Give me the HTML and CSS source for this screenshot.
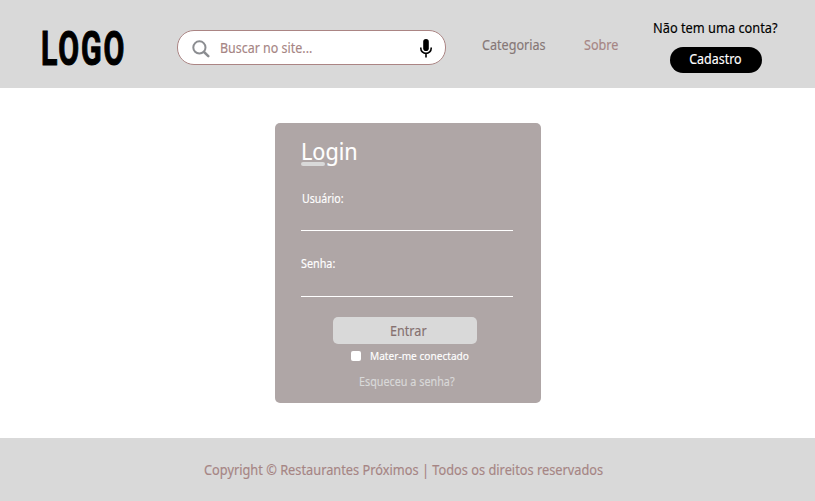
FILE: index.html
```html
<!DOCTYPE html>
<html lang="pt-BR">
<head>
<meta charset="utf-8">
<title>Login</title>
<link rel="stylesheet" href="styles.css">
</head>
<body>
<header class="header">
  <a class="logo"><span class="logo-text">LOGO</span></a>
  <div class="search">
    <svg class="search-icon" width="18" height="18" viewBox="0 0 18 18"><circle cx="7.4" cy="7.4" r="6.1" fill="none" stroke="#8b8d91" stroke-width="2"/><path d="M12 12l4.3 4.1" stroke="#8b8d91" stroke-width="2.5" stroke-linecap="round"/></svg>
    <span class="search-label condensed">Buscar no site...</span>
    <svg class="mic-icon" width="12" height="19" viewBox="0 0 12 19"><rect x="3.2" y="0" width="5.6" height="12" rx="2.8"/><path d="M.8 8.5v.7a5.2 5.2 0 0 0 10.4 0v-.7M6 14.5v4" fill="none" stroke="#000" stroke-width="1.6"/></svg>
  </div>
  <nav class="nav"><a class="categories"><span class="condensed">Categorias</span></a><a class="about"><span class="condensed">Sobre</span></a></nav>
  <div class="account">
    <span class="question condensed">Não tem uma conta?</span>
    <a class="signup"><span class="signup-label condensed">Cadastro</span></a>
  </div>
</header>
<main class="main">
  <form class="card">
    <h1 class="title"><span class="condensed">Login</span></h1>
    <div class="title-bar"></div>
    <div class="field user"><span class="user-label condensed">Usuário:</span></div>
    <div class="field password"><span class="condensed">Senha:</span></div>
    <div class="submit"><span class="submit-label condensed">Entrar</span></div>
    <div class="remember"><span class="box"></span><span class="remember-label condensed">Mater-me conectado</span></div>
    <a class="forgot"><span class="condensed">Esqueceu a senha?</span></a>
  </form>
</main>
<footer class="footer"><span class="copyright condensed">Copyright © Restaurantes Próximos | Todos os direitos reservados</span></footer>
</body>
</html>
```
FILE: styles.css
```css
* { box-sizing: border-box; }
body {
  margin: 0;
  height: 501px;
  display: flex;
  flex-direction: column;
  background: #fff;
  font: 14px/18px "Noto Sans", sans-serif;
  white-space: nowrap;
}
.condensed {
  display: inline-block;
  transform: scaleX(.9);
  transform-origin: 0 50%;
  -webkit-text-stroke: .15px currentColor;
}
.header {
  height: 88px;
  display: flex;
  align-items: flex-start;
  background: #d9d9d9;
}
.logo { width: 177px; padding: 24px 0 0 41px; }
.logo-text {
  display: block;
  width: 130px;
  font: bold 48px/50px Roboto, sans-serif;
  letter-spacing: 3px;
  -webkit-text-stroke: 1.2px #000;
  transform: scaleX(.63);
  transform-origin: 0 0;
}
.search {
  width: 269px;
  height: 35px;
  margin-top: 30px;
  padding: 0 13px 0 14px;
  display: flex;
  align-items: center;
  border: 1px solid #ab8584;
  border-radius: 17px;
  background: #fff;
  color: #a68584;
}
.search-icon { flex: none; margin: 2px 10px 0 0; }
.search-label { transform: scaleX(.89); }
.mic-icon { flex: none; margin-left: auto; margin-top: 2px; }
.nav { display: flex; width: 207px; padding: 36px 0 0 36px; }
.categories { width: 102px; color: #857776; }
.about { color: #a68584; }
.account { width: 145px; padding-top: 19px; }
.question { transform: scaleX(.913); }
.signup {
  display: flex;
  justify-content: center;
  width: 92px;
  height: 26px;
  margin: 10px 0 0 17px;
  padding: 3px 1px 0 0;
  border-radius: 13px;
  background: #000;
  color: #fff;
}
.signup-label { transform: scaleX(.89); transform-origin: 50% 50%; }
.main { height: 350px; padding: 35px 0 0 275px; }
.card {
  width: 266px;
  height: 280px;
  padding: 14px 28px 0 26px;
  border-radius: 5px;
  background: #afa6a6;
  color: #fff;
}
.title { margin: 0; height: 25px; font-size: 24px; line-height: 27px; font-weight: 400; }
.title-bar { width: 24px; height: 4px; border-radius: 2px; background: #d9d9d9; }
.field { border-bottom: 1px solid #fff; font-size: 12px; line-height: 16px; }
.user { height: 65px; padding: 25px 0 0 1px; }
.user-label { transform: scaleX(.88); }
.password { height: 66px; padding-top: 25px; }
.submit {
  width: 144px;
  height: 27px;
  margin: 20px 0 0 32px;
  padding: 5px 0 0 6px;
  border-radius: 5px;
  background: #d9d9d9;
  color: #857170;
  text-align: center;
}
.submit-label { transform-origin: 50% 50%; }
.remember { display: flex; align-items: center; margin: 4px 0 0 50px; height: 16px; font-size: 11px; line-height: 16px; }
.box { width: 10px; height: 10px; margin-right: 9px; border-radius: 2px; background: #fff; }
.remember-label { transform: scaleX(.92); }
.forgot { display: block; margin: 10px 0 0 58px; font-size: 12px; line-height: 16px; color: #d9d9d9; }
.footer { height: 63px; padding: 23px 0 0 204px; background: #d9d9d9; color: #a68584; }
.copyright { transform: scaleX(.913); }
```
